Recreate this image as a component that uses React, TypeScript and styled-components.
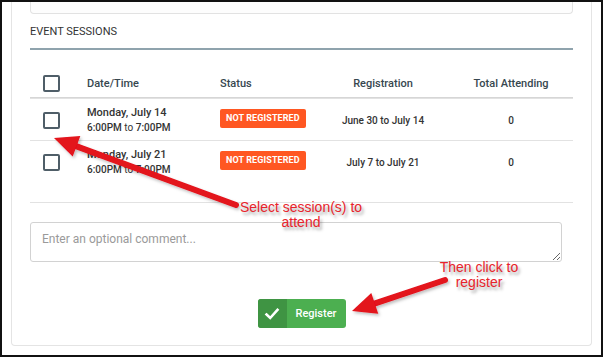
import styled, { createGlobalStyle } from 'styled-components';

const GlobalStyle = createGlobalStyle`
  html, body { margin: 0; padding: 0; background: #fff; }
  * { box-sizing: border-box; }
`;

interface SessionProps {
  day: string;
  start: string;
  end: string;
  registration: string;
  attending: number;
}

const sessions: SessionProps[] = [
  { day: 'Monday, July 14', start: '6:00PM', end: '7:00PM', registration: 'June 30 to July 14', attending: 0 },
  { day: 'Monday, July 21', start: '6:00PM', end: '7:00PM', registration: 'July 7 to July 21', attending: 0 },
];

const Frame = styled.div`
  position: relative;
  width: 603px;
  height: 357px;
  border: 2px solid #111;
  background: #fff;
  overflow: hidden;
  font-family: Roboto, 'Noto Sans', sans-serif;
  color: #333;
`;

const Card = styled.div`
  margin-left: 9px;
  width: 581px;
  border: 1px solid #e4e4e4;
  border-top: none;
  border-radius: 0 0 4px 4px;
  padding: 0 18px 17px;
`;

const PrevBox = styled.div`
  height: 12px;
  border: 1px solid #e2e2e2;
  border-top: none;
  border-radius: 0 0 4px 4px;
  background: #fdfdfd;
`;

const SectionTitle = styled.div`
  font-size: 11px;
  line-height: 13px;
  padding: 11px 0 10px;
  color: #333;
  border-bottom: 2px solid #8fa3ad;
`;

const Grid = styled.div`
  display: grid;
  grid-template-columns: 57px 133px 90px 146px 110px 1fr;
`;

const Row = styled(Grid)<{ $head?: boolean }>`
  height: ${(p) => (p.$head ? '48px' : '42px')};
  padding-top: ${(p) => (p.$head ? '20px' : '2px')};
  align-items: center;
  border-bottom: ${(p) => (p.$head ? '1px solid #d6d6d6' : 'none')};
  & + & {
    border-top: 1px solid #e2e2e2;
  }
`;

const HeadCell = styled.div<{ $center?: boolean }>`
  font-size: 11px;
  font-weight: 500;
  color: #37474f;
  text-align: ${(p) => (p.$center ? 'center' : 'left')};
`;

const Check = styled.span`
  display: block;
  width: 17px;
  height: 17px;
  margin-left: 13px;
  border: 2px solid #4f5e68;
  border-radius: 2px;
`;

const DateCell = styled.div`
  display: flex;
  flex-direction: column;
  gap: 3px;
  margin-top: -2px;
`;

const Day = styled.span`
  font-size: 11px;
  font-weight: 500;
  color: #333;
`;

const Time = styled.span`
  font-size: 10px;
  font-weight: 500;
  color: #333;
  em {
    font-style: normal;
    font-weight: 400;
  }
`;

const Badge = styled.span`
  justify-self: start;
  background: #ff5722;
  color: #fff;
  font-size: 9px;
  font-weight: 700;
  letter-spacing: 0.1px;
  padding: 0 6px;
  height: 19px;
  line-height: 19px;
  border-radius: 2px;
  margin-top: -4px;
`;

const Value = styled.div`
  text-align: center;
  font-size: 10px;
  font-weight: 500;
  color: #333;
`;

const Rule = styled.div`
  margin-top: 20px;
  border-top: 1px solid #e2e2e2;
`;

const Comment = styled.textarea`
  display: block;
  margin-top: 19px;
  width: 532px;
  height: 40px;
  border: 1px solid #d2d2d2;
  border-radius: 3px;
  padding: 9px 11px;
  font-family: Roboto, sans-serif;
  font-size: 12px;
  color: #333;
  &::placeholder {
    color: #9a9a9a;
  }
`;

const ButtonRow = styled.div`
  display: flex;
  justify-content: center;
  margin-top: 37px;
`;

const RegisterButton = styled.button`
  display: flex;
  height: 29px;
  width: 88px;
  padding: 0;
  border: none;
  border-radius: 3px;
  overflow: hidden;
  background: #4caf50;
  color: #fff;
  font-family: Roboto, sans-serif;
  font-size: 11px;
  font-weight: 500;
`;

const ButtonIcon = styled.span`
  display: flex;
  align-items: center;
  justify-content: center;
  width: 29px;
  height: 100%;
  background: #3f9443;
`;

const ButtonLabel = styled.span`
  flex: 1;
  display: flex;
  align-items: center;
  justify-content: center;
`;

const Overlay = styled.svg`
  position: absolute;
  left: -2px;
  top: -2px;
  width: 603px;
  height: 357px;
  pointer-events: none;
`;

const Note = styled.div<{ $x: number; $y: number }>`
  position: absolute;
  left: ${(p) => p.$x}px;
  top: ${(p) => p.$y}px;
  transform: translateX(-50%);
  font-family: 'Liberation Sans', Arial, sans-serif;
  font-size: 14px;
  line-height: 15px;
  color: #e8232b;
  text-align: center;
  white-space: nowrap;
  text-shadow: 2px 3px 3px rgba(0, 0, 0, 0.35);
`;

const Arrow = ({ x1, y1, x2, y2 }: { x1: number; y1: number; x2: number; y2: number }) => {
  const dx = x2 - x1;
  const dy = y2 - y1;
  const len = Math.hypot(dx, dy);
  const ux = dx / len;
  const uy = dy / len;
  const nx = -uy;
  const ny = ux;
  const headLen = 24;
  const half = 11;
  const bx = x2 - ux * headLen;
  const by = y2 - uy * headLen;
  const pts = [
    [bx + nx * half, by + ny * half],
    [x2, y2],
    [bx - nx * half, by - ny * half],
  ]
    .map((p) => p.join(','))
    .join(' ');
  return (
    <g filter="url(#shadow)">
      <line x1={x1} y1={y1} x2={bx + ux * 2} y2={by + uy * 2} stroke="#e3121b" strokeWidth={6} strokeLinecap="round" />
      <polygon points={pts} fill="#e3121b" />
    </g>
  );
};

export default function App() {
  return (
    <>
      <GlobalStyle />
      <Frame>
        <Card>
          <PrevBox />
          <SectionTitle>EVENT SESSIONS</SectionTitle>
          <Row $head>
            <Check />
            <HeadCell>Date/Time</HeadCell>
            <HeadCell>Status</HeadCell>
            <HeadCell $center>Registration</HeadCell>
            <HeadCell $center>Total Attending</HeadCell>
          </Row>
          {sessions.map((s) => (
            <Row key={s.day}>
              <Check />
              <DateCell>
                <Day>{s.day}</Day>
                <Time>
                  {s.start} <em>to</em> {s.end}
                </Time>
              </DateCell>
              <Badge>NOT REGISTERED</Badge>
              <Value>{s.registration}</Value>
              <Value>{s.attending}</Value>
            </Row>
          ))}
          <Rule />
          <Comment placeholder="Enter an optional comment..." />
          <ButtonRow>
            <RegisterButton>
              <ButtonIcon>
                <svg width="16" height="16" viewBox="0 0 16 16">
                  <path d="M2.5 8.5 L6.2 12 L13.5 3.8" fill="none" stroke="#fff" strokeWidth="2.6" strokeLinecap="square" />
                </svg>
              </ButtonIcon>
              <ButtonLabel>Register</ButtonLabel>
            </RegisterButton>
          </ButtonRow>
        </Card>
        <Overlay viewBox="0 0 603 357">
          <defs>
            <filter id="shadow" x="-10%" y="-10%" width="130%" height="140%">
              <feDropShadow dx="1.5" dy="2" stdDeviation="1.5" floodColor="#000" floodOpacity="0.25" />
            </filter>
          </defs>
          <Arrow x1={236} y1={205} x2={54} y2={138} />
          <Arrow x1={445} y1={280} x2={352} y2={311} />
        </Overlay>
        <Note $x={299} $y={198}>
          Select session(s) to
          <br />
          attend
        </Note>
        <Note $x={477} $y={258}>
          Then click to
          <br />
          register
        </Note>
      </Frame>
    </>
  );
}
